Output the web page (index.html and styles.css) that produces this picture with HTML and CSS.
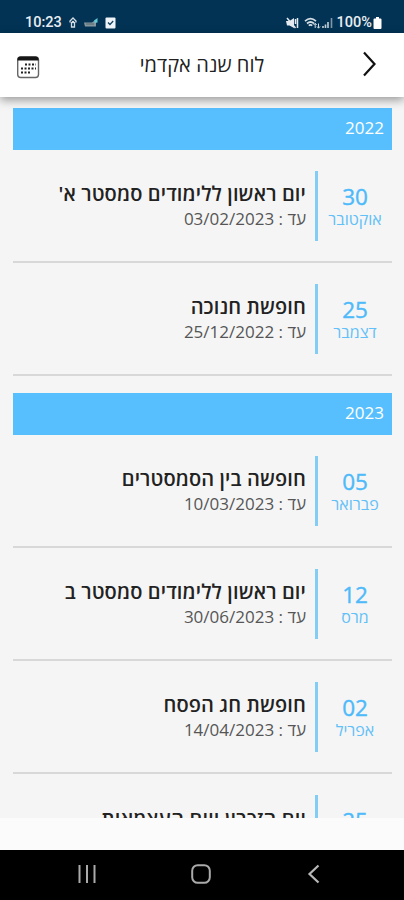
FILE: index.html
```html
<!DOCTYPE html>
<html lang="he" dir="rtl">
<head>
<meta charset="utf-8">
<title>לוח שנה אקדמי</title>
<link rel="stylesheet" href="styles.css">
</head>
<body>
<div class="phone">
  <div class="status" dir="ltr">
    <div class="status-left">
      <span class="time">10:23</span>
      <svg class="s-icon" width="8" height="12" viewBox="0 0 8 12"><path d="M1 5.500V4L4 1l3 3v1.500M2.500 5v5h3V5" fill="none" stroke="#d5dee5" stroke-width="1.300"/><circle cx="4" cy="5" r="1.300" fill="#d5dee5"/></svg>
      <svg class="s-icon" width="14" height="12" viewBox="0 0 14 12"><path d="M0 5.500h8l2-1.500h2v5.500H1z" fill="#87979f"/><path d="M2 7h8" stroke="#53666f"/><path d="M10 3.500 13.500 1v4.500L11 6z" fill="#62c7d4"/></svg>
      <svg class="s-icon" width="11" height="12" viewBox="0 0 11 12"><rect x=".5" y=".5" width="10" height="11" rx="1" fill="#f0f5fa"/><path d="m3 5.500 2 2 3.200-3.500" fill="none" stroke="#17425f" stroke-width="1.300"/></svg>
    </div>
    <div class="status-right">
      <svg width="13" height="12" viewBox="0 0 13 12"><path d="M0 4h3.500L8 1v10L3.500 8.500H1z" fill="#e4eaef"/><path d="M1 1l8.500 10M11.500 1v10M9.500 2v5" stroke="#e4eaef" stroke-width="1.500"/></svg>
      <svg class="wifi" width="17" height="12" viewBox="0 0 17 12"><path d="M1 4.200Q6.500-.8 12 4.200M3 6.500Q6.500 3.500 10 6.500M4.800 8.600Q6.500 7 8.200 8.600" fill="none" stroke="#d5dee5" stroke-width="1.700"/><path d="M11.200 11V6.500M9.700 8l1.500-1.700L12.700 8M14.500 6.500V11M13 9.500l1.500 1.700L16 9.500" fill="none" stroke="#d5dee5"/></svg>
      <svg width="11" height="12" viewBox="0 0 11 12"><path d="M1 9v2M3.500 7.500V11M6 5v6" stroke="#c5d0d9" stroke-width="1.600"/><path d="M9.500 1v10" stroke="#8197a8" stroke-width="1.600"/></svg>
      <span class="percent">100%</span>
      <svg width="9" height="12" viewBox="0 0 9 12"><path d="M3 0h3v1.500h1.500q1 0 1 1V11q0 1-1 1h-6q-1 0-1-1V2.500q0-1 1-1H3z" fill="#fff"/></svg>
    </div>
  </div>

  <header class="bar">
    <svg class="next" width="16" height="28" viewBox="0 0 16 28"><path d="M3 2.500 13.500 14 3 25.500" fill="none" stroke="#111" stroke-width="2.200"/></svg>
    <h1 class="title">לוח שנה אקדמי</h1>
    <svg class="calendar" width="24" height="24" viewBox="0 0 24 24"><rect x="1.700" y="2" width="20.800" height="20.500" rx="3" fill="#fff" stroke="#666" stroke-width="1.400"/><path d="M1.500 5.500v-1q0-3 3-3h15q3 0 3 3v1z" fill="#161616"/><path d="M9 9.500h11M5 13.500h15M5 17.500h9" stroke="#222" stroke-width="2" stroke-dasharray="2 1.500"/></svg>
  </header>

  <main class="list">
    <h2 class="year">2022</h2>
    <article class="event">
      <div class="date"><span class="day">30</span><span class="month">אוקטובר</span></div>
      <div class="info"><h3 class="name">יום ראשון ללימודים סמסטר א'</h3><p class="until">עד : 03/02/2023</p></div>
    </article>
    <article class="event">
      <div class="date"><span class="day">25</span><span class="month">דצמבר</span></div>
      <div class="info"><h3 class="name">חופשת חנוכה</h3><p class="until">עד : 25/12/2022</p></div>
    </article>
    <h2 class="year later">2023</h2>
    <article class="event">
      <div class="date"><span class="day">05</span><span class="month">פברואר</span></div>
      <div class="info"><h3 class="name">חופשה בין הסמסטרים</h3><p class="until">עד : 10/03/2023</p></div>
    </article>
    <article class="event">
      <div class="date"><span class="day">12</span><span class="month">מרס</span></div>
      <div class="info"><h3 class="name">יום ראשון ללימודים סמסטר ב</h3><p class="until">עד : 30/06/2023</p></div>
    </article>
    <article class="event">
      <div class="date"><span class="day">02</span><span class="month">אפריל</span></div>
      <div class="info"><h3 class="name">חופשת חג הפסח</h3><p class="until">עד : 14/04/2023</p></div>
    </article>
    <article class="event partial">
      <div class="date"><span class="day">25</span></div>
      <div class="info"><h3 class="name">יום הזכרון ויום העצמאות</h3></div>
    </article>
  </main>
  <div class="gap"></div>
  <nav class="nav" dir="ltr">
    <svg width="20" height="20" viewBox="0 0 20 20"><path d="M2.500 1v18M10 1v18M17.500 1v18" stroke="#aaa" stroke-width="2"/></svg>
    <svg width="20" height="20" viewBox="0 0 20 20"><rect x="1.200" y="1.200" width="17.600" height="17.600" rx="5.500" fill="none" stroke="#aaa" stroke-width="2"/></svg>
    <svg width="20" height="20" viewBox="0 0 20 20"><path d="M14.500 1.500 5.500 10l9 8.500" fill="none" stroke="#b8b8b8" stroke-width="2.200"/></svg>
  </nav>
</div>
</body>
</html>
```
FILE: styles.css
```css
* { box-sizing: border-box; }
body { margin: 0; font-family: "Open Sans", "Noto Sans", sans-serif; background: #fafafa; }
h1, h2, h3, p { margin: 0; font-weight: 400; }
svg { display: block; flex: none; }
.phone { width: 404px; height: 900px; display: flex; flex-direction: column; overflow: hidden; }
.status { height: 33px; flex: none; display: flex; justify-content: space-between; padding: 13px 22px 0 25px; background: #023354; color: #e8eef3; font: 500 14.5px/20px Roboto, sans-serif; }
.status-left, .status-right { display: flex; align-items: center; height: 20px; }
.time { width: 37px; }
.s-icon { margin-left: 7px; }
.wifi { margin-left: 5px; margin-right: 1px; }
.percent { margin: 0 1px 0 4px; }
.bar { height: 64px; flex: none; display: flex; align-items: center; justify-content: space-between; padding: 0 27px 0 16px; background: #fff; box-shadow: 0 3px 9px rgba(0, 0, 0, .38); z-index: 1; }
.next { margin-top: -2px; }
.title { font-size: 20px; line-height: 26px; letter-spacing: .05px; color: #222; padding-left: 3px; }
.calendar { margin-top: 4px; }
.list { height: 721px; flex: none; overflow: hidden; padding: 11px 12px 0 13px; background: #f5f5f5; }
.year { height: 42px; padding: 0 8px; background: #58bffe; color: #fff; font-size: 17px; line-height: 40px; }
.later { margin-top: 17px; }
.event { height: 113px; display: flex; align-items: center; border-bottom: 2px solid #d8d8d8; }
.date { width: 77px; height: 70px; flex: none; display: flex; flex-direction: column; align-items: center; padding-top: 12px; border-left: 3px solid #83cdf4; color: #4ebafa; }
.day { font-size: 22.5px; line-height: 28px; -webkit-text-stroke: .4px #4ebafa; }
.month { font-size: 16px; line-height: 16px; color: #62c0f8; }
.info { height: 70px; padding: 9px 9px 0 0; white-space: nowrap; }
.name { font-size: 20px; line-height: 27px; letter-spacing: .13px; font-weight: 600; color: #222; }
.partial .info { padding-top: 10px; }
.partial .name { letter-spacing: .2px; }
.until { font-size: 17px; line-height: 24px; color: #555; }
.gap { height: 32px; flex: none; background: #fbfbfb; }
.nav { height: 50px; flex: none; display: flex; align-items: center; justify-content: space-between; padding: 0 80px 2px 77px; background: #000; }
```
